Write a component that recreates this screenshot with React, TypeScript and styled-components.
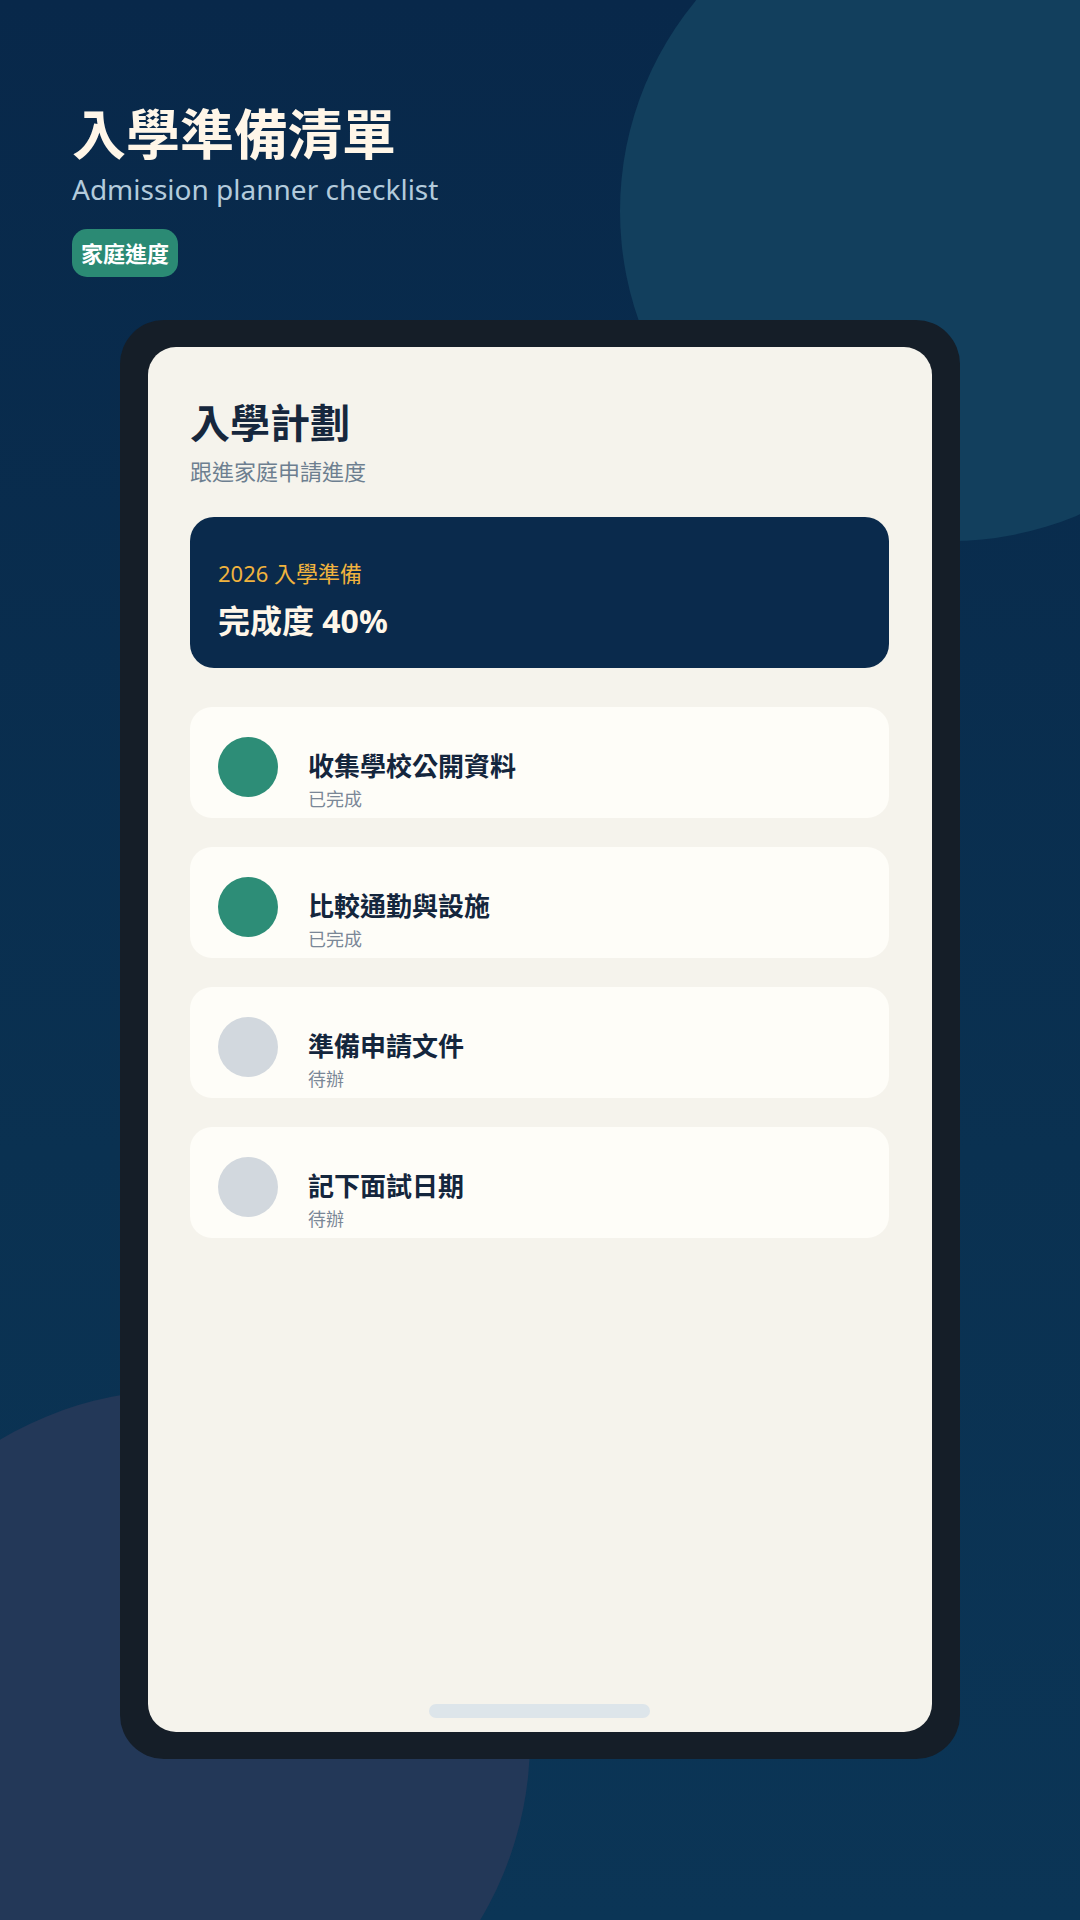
import React from 'react';
import styled, { createGlobalStyle } from 'styled-components';

const font = `"Noto Sans", "Noto Sans CJK TC", sans-serif`;

const GlobalStyle = createGlobalStyle`
    html, body {
        margin: 0;
        padding: 0;
        background: #08284a;
    }
    * {
        box-sizing: border-box;
    }
`;

const Page = styled.div`
    position: relative;
    width: 1080px;
    height: 1920px;
    overflow: hidden;
    font-family: ${font};
    background: linear-gradient(180deg, #08284a 0%, #0a3151 60%, #0b3556 100%);
`;

const Blob = styled.div<{ $size: number; $left: number; $top: number; $color: string }>`
    position: absolute;
    left: ${(p) => p.$left}px;
    top: ${(p) => p.$top}px;
    width: ${(p) => p.$size}px;
    height: ${(p) => p.$size}px;
    border-radius: 50%;
    background: ${(p) => p.$color};
`;

const Header = styled.header`
    position: relative;
    padding: 102px 72px 0;
`;

const Title = styled.h1`
    margin: 0;
    font-size: 54px;
    line-height: 1.2;
    font-weight: 700;
    color: #fff6e8;
`;

const Subtitle = styled.p`
    margin: 4px 0 0;
    font-size: 28px;
    line-height: 1.3;
    font-weight: 400;
    color: #b3cbdc;
`;

const Badge = styled.span`
    display: inline-block;
    margin-top: 22px;
    padding: 9px 9px;
    border-radius: 15px;
    background: #2b8a74;
    color: #ffffff;
    font-size: 22px;
    line-height: 30px;
    font-weight: 700;
`;

const Phone = styled.div`
    position: relative;
    margin: 43px 120px 0;
    height: 1439px;
    padding: 27px 28px;
    border-radius: 44px;
    background: #151e28;
`;

const Screen = styled.div`
    display: flex;
    flex-direction: column;
    height: 100%;
    border-radius: 28px;
    background: #f5f3ec;
    padding: 52px 43px 14px 42px;
`;

const ScreenTitle = styled.h2`
    margin: 0;
    font-size: 40px;
    line-height: 1.2;
    font-weight: 700;
    color: #16273d;
`;

const ScreenSub = styled.p`
    margin: 9px 0 0;
    font-size: 22px;
    line-height: 1.4;
    color: #6d7f90;
`;

const ProgressCard = styled.div`
    margin-top: 30px;
    height: 151px;
    border-radius: 24px;
    background: #0a2a4c;
    padding: 41px 28px 0;
`;

const ProgressLabel = styled.div`
    font-size: 22px;
    line-height: 1.4;
    color: #f0b33e;
`;

const ProgressValue = styled.div`
    margin-top: 13px;
    font-size: 32px;
    line-height: 1.2;
    font-weight: 700;
    color: #fff6e8;
`;

const TaskList = styled.div`
    display: flex;
    flex-direction: column;
    gap: 29px;
    margin-top: 39px;
`;

const TaskCard = styled.div`
    display: flex;
    align-items: flex-start;
    gap: 30px;
    height: 111px;
    padding: 30px 28px 0;
    border-radius: 22px;
    background: #fefdf8;
`;

const Dot = styled.div<{ $done: boolean }>`
    flex: none;
    width: 60px;
    height: 60px;
    border-radius: 50%;
    background: ${(p) => (p.$done ? '#2d8d77' : '#d2d8de')};
`;

const TaskText = styled.div`
    display: flex;
    flex-direction: column;
    padding-top: 14px;
`;

const TaskName = styled.div`
    font-size: 26px;
    line-height: 1.2;
    font-weight: 700;
    color: #14263d;
`;

const TaskState = styled.div`
    margin-top: 6px;
    font-size: 18px;
    line-height: 1.3;
    color: #7a8797;
`;

const HomeBar = styled.div`
    margin: auto auto 0;
    width: 221px;
    height: 14px;
    border-radius: 7px;
    background: #dde5ea;
`;

const tasks = [
    { name: '收集學校公開資料', done: true },
    { name: '比較通勤與設施', done: true },
    { name: '準備申請文件', done: false },
    { name: '記下面試日期', done: false },
];

export default function App() {
    return (
        <Page>
            <GlobalStyle />
            <Blob $size={660} $left={620} $top={-119} $color="#123f5d" />
            <Blob $size={700} $left={-170} $top={1390} $color="#233858" />
            <Header>
                <Title>入學準備清單</Title>
                <Subtitle>Admission planner checklist</Subtitle>
                <Badge>家庭進度</Badge>
            </Header>
            <Phone>
                <Screen>
                    <ScreenTitle>入學計劃</ScreenTitle>
                    <ScreenSub>跟進家庭申請進度</ScreenSub>
                    <ProgressCard>
                        <ProgressLabel>2026 入學準備</ProgressLabel>
                        <ProgressValue>完成度 40%</ProgressValue>
                    </ProgressCard>
                    <TaskList>
                        {tasks.map((t) => (
                            <TaskCard key={t.name}>
                                <Dot $done={t.done} />
                                <TaskText>
                                    <TaskName>{t.name}</TaskName>
                                    <TaskState>{t.done ? '已完成' : '待辦'}</TaskState>
                                </TaskText>
                            </TaskCard>
                        ))}
                    </TaskList>
                    <HomeBar />
                </Screen>
            </Phone>
        </Page>
    );
}
